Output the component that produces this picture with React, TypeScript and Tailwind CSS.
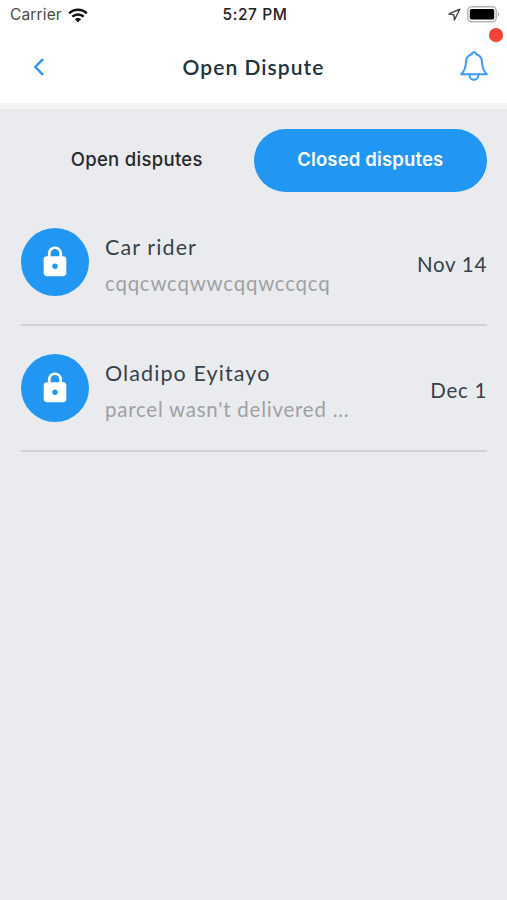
import { MdLock } from 'react-icons/md';

interface Dispute {
  name: string;
  message: string;
  date: string;
}

const disputes: Dispute[] = [
  { name: 'Car rider', message: 'cqqcwcqwwcqqwccqcq', date: 'Nov 14' },
  { name: 'Oladipo Eyitayo', message: "parcel wasn't delivered ...", date: 'Dec 1' },
];

function WifiIcon() {
  return (
    <svg width="20" height="15" viewBox="0 0 20 15" fill="none">
      <path d="M1.2 5.3C6.1.7 13.9.7 18.8 5.3" stroke="#111" strokeWidth="2.5" />
      <path d="M4.3 8.7c3.2-3 8.2-3 11.4 0" stroke="#111" strokeWidth="2.4" />
      <path d="M10 14.3 6.8 11.2c1.8-1.6 4.6-1.6 6.4 0L10 14.3Z" fill="#111" />
    </svg>
  );
}

function LocationIcon() {
  return (
    <svg width="13" height="13" viewBox="0 0 13 13" fill="none">
      <path
        d="M11.8 1.2 1 6l5 .9.4 5.1 5.4-10.8Z"
        stroke="#444"
        strokeWidth="1.4"
        strokeLinejoin="round"
      />
    </svg>
  );
}

function BatteryIcon() {
  return (
    <svg width="33" height="17" viewBox="0 0 33 17" fill="none">
      <rect x="0.8" y="0.8" width="28.4" height="15" rx="4" stroke="#b4b4b4" strokeWidth="1.5" />
      <rect x="2.8" y="3" width="24.4" height="10.6" rx="1.5" fill="#000" />
      <path d="M30.9 6c1.6.5 1.6 4.1 0 4.6V6Z" fill="#b4b4b4" />
    </svg>
  );
}

function BellIcon() {
  return (
    <svg
      width="28"
      height="31"
      viewBox="0 0 28 31"
      fill="none"
      stroke="#3d9cf3"
      strokeWidth="2"
      strokeLinejoin="round"
      strokeLinecap="round"
    >
      <path d="M11.7 3.3c.2-1.3 1-2.1 2.3-2.1s2.1.8 2.3 2.1c3.4 1 5.5 3.8 5.7 7.4.2 6.3 1.2 9 4.8 12.6H1.2c3.6-3.6 4.6-6.3 4.8-12.6.2-3.6 2.3-6.4 5.7-7.4Z" />
      <path d="M9.7 23.6v.8a4.3 4.3 0 0 0 8.6 0v-.8" />
    </svg>
  );
}

function StatusBar() {
  return (
    <div className="grid h-[30px] grid-cols-3 items-center pl-[10px] pr-[7px] font-['Inter',sans-serif] text-[15.5px]">
      <div className="flex items-center gap-[6px] text-[#4a4a4a]">
        <span className="tracking-[0.15px]">Carrier</span>
        <WifiIcon />
      </div>
      <span className="whitespace-nowrap text-center font-medium tracking-[0.55px] text-[#222]">
        5:27 PM
      </span>
      <div className="flex items-center justify-end gap-[6px] pb-[1px]">
        <LocationIcon />
        <BatteryIcon />
      </div>
    </div>
  );
}

function Header() {
  return (
    <header className="relative flex h-[73px] items-center justify-between pl-[33px] pr-[19px]">
      <svg width="12" height="20" viewBox="0 0 12 20" fill="none">
        <path d="M10 2.2 2.4 10l7.6 7.8" stroke="#2b96f3" strokeWidth="2.5" />
      </svg>
      <h1 className="pl-[2px] text-[21px] font-semibold tracking-[1.05px] text-[#20333b]">
        Open Dispute
      </h1>
      <BellIcon />
      <span className="absolute right-[4px] top-[-2px] size-[14px] rounded-full bg-[#f44336] shadow-sm" />
    </header>
  );
}

function DisputeRow({ dispute }: { dispute: Dispute }) {
  return (
    <li className="flex h-[126px] border-b-2 border-[#cfd1d4] pt-[28px]">
      <div className="flex size-[68px] shrink-0 items-center justify-center rounded-full bg-[#2196f3]">
        <MdLock className="size-[34px] text-white" />
      </div>
      <div className="ml-4 flex-1 whitespace-nowrap">
        <p className="mt-[3px] text-[21.5px] leading-[32px] tracking-[1.1px] text-[#36424a]">
          {dispute.name}
        </p>
        <p className="mt-[4px] text-[20.5px] leading-[32px] tracking-[0.75px] text-[#a0a1a3]">
          {dispute.message}
        </p>
      </div>
      <span className="mt-[20px] text-[20.5px] leading-[32px] tracking-[0.7px] text-[#36424a]">
        {dispute.date}
      </span>
    </li>
  );
}

export default function App() {
  return (
    <div className="h-[900px] w-[507px] overflow-hidden bg-[#eaebef] font-['Lato',sans-serif]">
      <div className="border-b-[6px] border-[#f4f4f5] bg-white">
        <StatusBar />
        <Header />
      </div>

      <div className="px-[20px] pt-[20px]">
        <div className="grid grid-cols-2 font-['Inter',sans-serif] text-[18.5px] tracking-[0.3px]">
          <button className="h-[63px] pb-[2px] font-medium text-[#26292c]">Open disputes</button>
          <button className="h-[63px] rounded-full bg-[#2196f3] pb-[2px] font-semibold tracking-[0.15px] text-white">
            Closed disputes
          </button>
        </div>
      </div>

      <ul className="ml-[21px] mr-[20px] mt-[8px]">
        {disputes.map((dispute) => (
          <DisputeRow key={dispute.name} dispute={dispute} />
        ))}
      </ul>
    </div>
  );
}
